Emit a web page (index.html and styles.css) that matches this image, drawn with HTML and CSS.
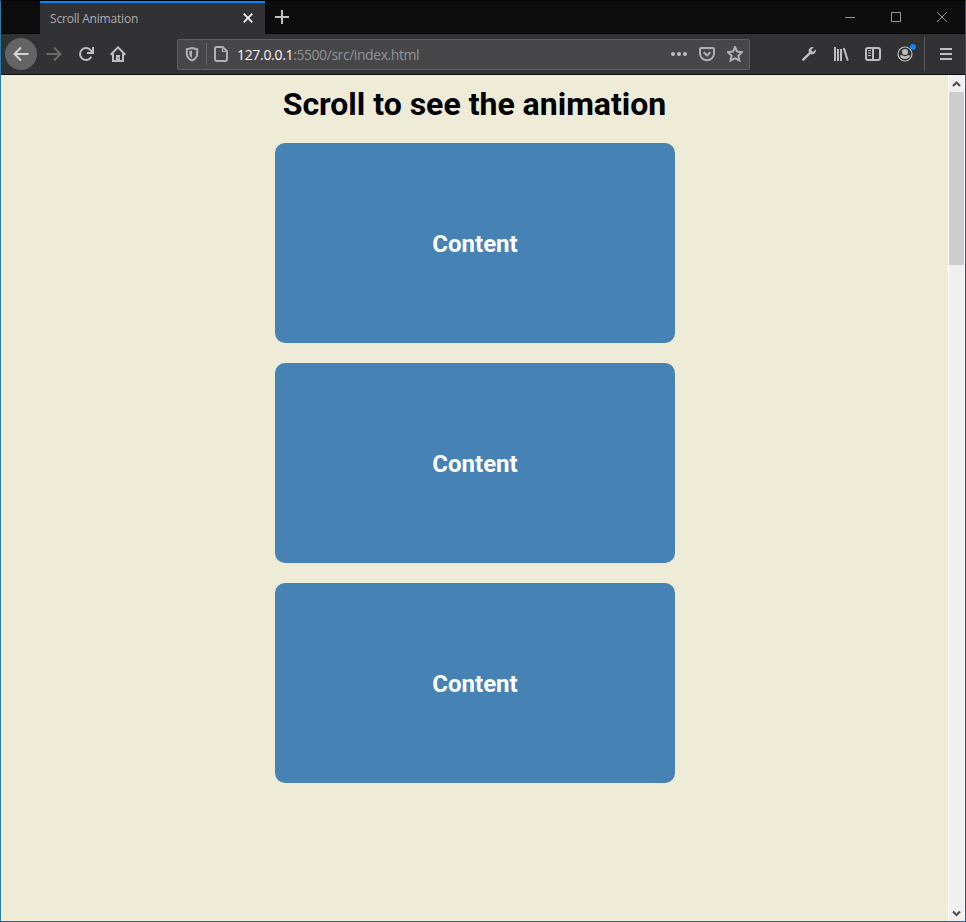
FILE: index.html
```html
<!DOCTYPE html>
<html lang="en">
<head>
<meta charset="utf-8">
<title>Scroll Animation</title>
<link rel="stylesheet" href="styles.css">
</head>
<body>
<div class="window">
  <header class="tabs">
    <div class="tab">
      <span class="tab-title">Scroll Animation</span>
      <svg class="tab-close" width="10" height="10" viewBox="0 0 10 10"><path d="M.7.7l8.6 8.6M9.3.7L.7 9.3"/></svg>
    </div>
    <svg class="new-tab" width="14" height="14" viewBox="0 0 14 14"><path d="M7 0v14M0 7h14"/></svg>
    <div class="controls">
      <svg width="10" height="10" viewBox="0 0 10 10"><path d="M0 5.5h10"/></svg>
      <svg width="10" height="10" viewBox="0 0 10 10"><path d="M.5.5h9v9h-9z"/></svg>
      <svg width="10" height="10" viewBox="0 0 10 10"><path d="M0 0l10 10M10 0L0 10"/></svg>
    </div>
  </header>
  <nav class="toolbar">
    <div class="nav-buttons">
      <span class="back"><svg class="icon" viewBox="0 0 16 16"><path d="M15.500 8H1.500M8 1.500L1.500 8 8 14.500"/></svg></span>
      <svg class="icon dim" viewBox="0 0 16 16"><path d="M.5 8h14M8 1.500L14.500 8 8 14.500"/></svg>
      <svg class="icon" viewBox="0 0 16 16"><path d="M13.300 10.800A6 6 0 1 1 13 4.700L14.200 6M15 1v6H9"/></svg>
      <svg class="icon" viewBox="0 0 16 16"><path d="M.7 8.700L8 1.400l7.300 7.300M3 7.500V15h10V7.500"/><path class="fill" d="M6 9h4v6H6z"/><path class="hole" d="M8.500 11.500v1"/></svg>
    </div>
    <div class="url-bar">
      <svg class="icon shield" viewBox="0 0 16 16"><path d="M8 2L13.200 3.200v4.300c0 3.300-2 5.600-5.200 7-3.200-1.400-5.200-3.700-5.200-7V3.200z"/><path class="fill" d="M8 4.500v7.500c-1.800-1-2.700-2.500-2.700-4.500V5z"/></svg>
      <span class="url-divider"></span>
      <svg class="icon page-icon" viewBox="0 0 16 16"><path d="M3.500 1h6.300L14 5.200V13a2 2 0 0 1-2 2H4a2 2 0 0 1-2-2V2.500A1.500 1.500 0 0 1 3.500 1z"/><path class="thin" d="M9.500 1v4.500H14"/></svg>
      <span class="url"><b>127.0.0.1</b>:5500/src/index.html</span>
      <div class="url-actions">
        <svg class="icon" viewBox="0 0 16 16"><g class="fill"><circle cx="2" cy="8" r="2"/><circle cx="8" cy="8" r="2"/><circle cx="14" cy="8" r="2"/></g></svg>
        <svg class="icon" viewBox="0 0 16 16"><path d="M2.200 2h11.600q1.200 0 1.200 1.200V7.500a7 6.700 0 0 1-14 0V3.200Q1 2 2.200 2z"/><path d="M4.700 6.300L8 9.500l3.300-3.200"/></svg>
        <svg class="icon" viewBox="0 0 16 16"><path d="M8 1l2.100 4.600 5 .6-3.700 3.400 1 5L8 12.200l-4.400 2.400 1-5L.9 6.200l5-.6z"/></svg>
      </div>
    </div>
    <div class="tools">
      <svg class="icon wrench" viewBox="0 0 16 16"><path class="fill" d="M12.700 1.200L10.600 3.300V5.400H12.700L14.800 3.300C15.600 6.200 13.200 8.900 9.900 8.300L7.700 6.100C7.100 2.800 9.800.4 12.700 1.200z"/><path d="M9.300 6.700L2.300 13.700"/></svg>
      <svg class="icon" viewBox="0 0 16 16"><path d="M2 1v14M5 3v12M8 3v12M10.800 2l4 12.600"/></svg>
      <svg class="icon" viewBox="0 0 16 16"><rect x="1" y="2" width="14" height="12" rx="2"/><path d="M8 2v12"/><path class="thin" d="M3 4.500h3M3 7h3M3 9.500h3"/></svg>
      <span class="account"><svg class="icon" viewBox="0 0 16 16"><circle class="thin" cx="8" cy="8" r="7"/><circle class="fill" cx="8" cy="6" r="3"/><path class="fill" d="M3 9.300h2.500a4 4 0 0 0 5 0H13c-.3 5-9.700 5-10 0z"/></svg><i class="badge"></i></span>
    </div>
    <span class="tool-divider"></span>
    <svg class="icon menu" viewBox="0 0 16 16"><path d="M2 3h12M2 8h12M2 13h12"/></svg>
  </nav>
  <div class="viewport">
    <main class="page">
      <h1>Scroll to see the animation</h1>
      <div class="box"><h2>Content</h2></div>
      <div class="box"><h2>Content</h2></div>
      <div class="box"><h2>Content</h2></div>
    </main>
    <aside class="scrollbar">
      <svg class="arrow" viewBox="0 0 15 17"><path d="M4 11l3.500-3.500L11 11"/></svg>
      <div class="thumb"></div>
      <svg class="arrow down" viewBox="0 0 15 17"><path d="M4 7.500L7.500 11 11 7.500"/></svg>
    </aside>
  </div>
</div>
</body>
</html>
```
FILE: styles.css
```css
* { box-sizing: border-box; }
body { margin: 0; overflow: hidden; }
svg { display: block; flex: none; fill: none; }
.window {
  width: 966px;
  height: 922px;
  display: flex;
  flex-direction: column;
  border: 1px solid #2a7da8;
  border-top-color: #050505;
  border-right-color: #2a5685;
  border-bottom-color: #36648c;
  font-family: "Open Sans", "Noto Sans", sans-serif;
}
.tabs {
  height: 33px;
  flex: none;
  display: flex;
  background: #0c0c0d;
  border-bottom: 1px solid #050505;
}
.tab {
  width: 225px;
  height: 33px;
  margin-left: 39px;
  padding: 0 12px 0 10px;
  display: flex;
  align-items: center;
  justify-content: space-between;
  background: #323234;
  border-top: 2px solid #0a84ff;
}
.tab-title { font-size: 12px; letter-spacing: -0.2px; color: #adadb1; }
.tab-close { stroke: #f0f0f0; stroke-width: 1.8; margin-bottom: 1px; }
.new-tab { stroke: #c0c0c0; stroke-width: 2; margin: 9px 0 0 10px; }
.controls { display: flex; gap: 36px; margin: 11px 18px 0 auto; }
.controls svg { stroke: #999992; stroke-width: 1; }
.toolbar {
  height: 41px;
  flex: none;
  display: flex;
  align-items: center;
  background: #323234;
  border-bottom: 1px solid #0c0c0d;
}
.icon { width: 16px; height: 16px; stroke: #bebebe; stroke-width: 2; }
.icon .fill { fill: #bebebe; stroke: none; }
.icon .hole { stroke: #323234; stroke-width: 1; }
.icon .thin { stroke-width: 1.2; }
.wrench { stroke-width: 2.4; stroke-linecap: round; }
.nav-buttons { display: flex; align-items: center; gap: 16px; padding-left: 4px; }
.back {
  width: 32px;
  height: 32px;
  margin-right: -7px;
  display: grid;
  place-items: center;
  border-radius: 50%;
  background: #646464;
}
.back .icon { stroke: #d5d5d5; }
.dim { stroke: #6c6a67; }
.url-bar {
  width: 573px;
  height: 31px;
  margin-left: 51px;
  padding-right: 6px;
  display: flex;
  align-items: center;
  background: #474749;
  border: 1px solid #606062;
  border-radius: 2px;
}
.shield { margin-left: 6px; stroke: #b1b1b3; }
.shield .fill { fill: #b1b1b3; }
.url-divider { width: 1px; height: 22px; margin: 0 6px; background: #67676b; }
.page-icon { stroke: #b1b1b3; }
.url { margin: 1px 0 0 8px; font-size: 14px; letter-spacing: -0.44px; color: #929295; white-space: nowrap; }
.url b { font-weight: 400; letter-spacing: -0.32px; color: #f5f5f5; }
.url-actions { display: flex; gap: 12px; margin-left: auto; }
.url-actions .icon { stroke: #b1b1b3; }
.tools { display: flex; gap: 16px; margin-left: 51px; }
.account { position: relative; }
.badge {
  position: absolute;
  top: -2px;
  right: -3px;
  width: 6px;
  height: 6px;
  border-radius: 50%;
  background: #0a84ff;
}
.tool-divider { width: 1px; height: 34px; margin-left: 11px; background: #5a5a5c; }
.menu { margin-left: 13px; }
.viewport { flex: 1; min-height: 0; display: flex; }
.page {
  flex: 1;
  display: flex;
  flex-direction: column;
  align-items: center;
  background: #eeebd7;
  font-family: Roboto, sans-serif;
}
h1 { margin: 10px 0; font-size: 32px; line-height: 38px; color: #000; }
.box {
  width: 400px;
  height: 200px;
  margin: 10px 0 10px 1px;
  padding-top: 2px;
  display: grid;
  place-items: center;
  flex: none;
  border-radius: 10px;
  background: #4682b4;
}
.box h2 { margin: 0; font-size: 24px; line-height: 28px; color: #fff; }
.scrollbar {
  width: 17px;
  display: flex;
  flex-direction: column;
  background: #f0f0f0;
  border-left: 1px solid #fff;
  border-right: 1px solid #fff;
}
.arrow { width: 15px; height: 17px; stroke: #505050; stroke-width: 2.2; }
.thumb { height: 173px; background: #cdcdcd; }
.down { margin-top: auto; }
```
